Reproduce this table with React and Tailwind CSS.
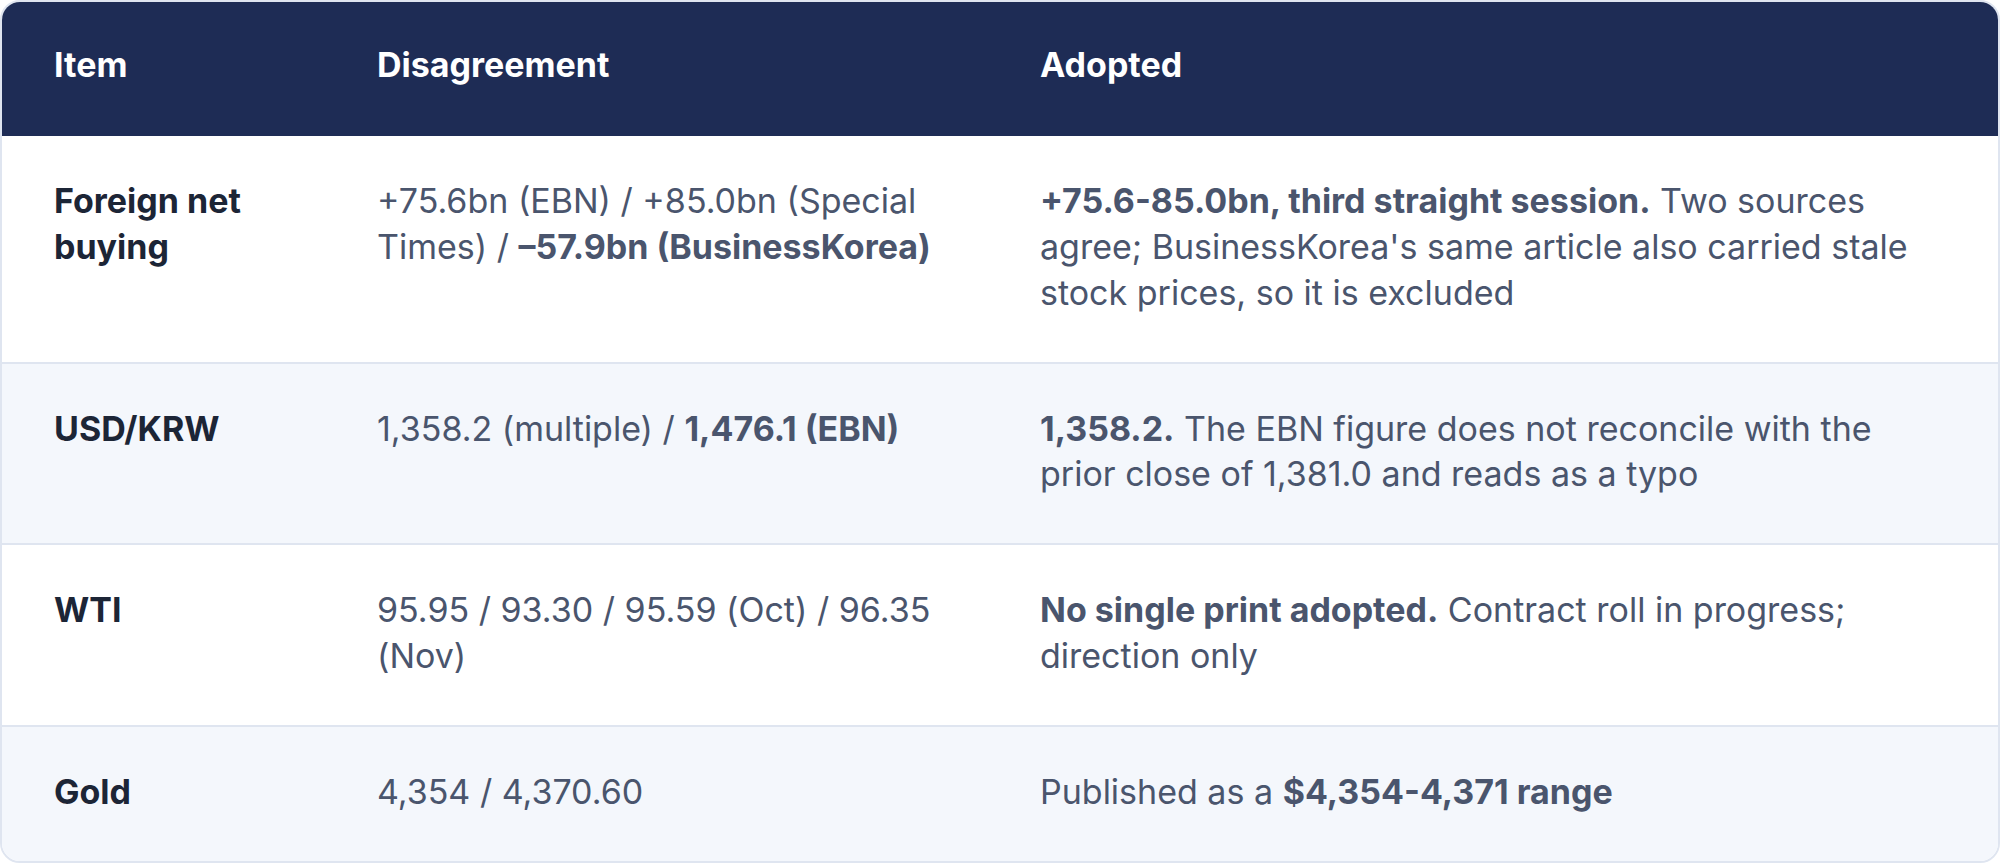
import React from 'react';

const rows = [
  {
    item: 'Foreign net buying',
    disagreement: (
      <>
        +75.6bn (EBN) / +85.0bn (Special Times) / <strong className="font-bold">–57.9bn (BusinessKorea)</strong>
      </>
    ),
    adopted: (
      <>
        <strong className="font-bold">+75.6-85.0bn, third straight session.</strong> Two sources agree; BusinessKorea's same article also carried stale stock prices, so it is excluded
      </>
    ),
  },
  {
    item: 'USD/KRW',
    disagreement: (
      <>
        1,358.2 (multiple) / <strong className="font-bold">1,476.1 (EBN)</strong>
      </>
    ),
    adopted: (
      <>
        <strong className="font-bold">1,358.2.</strong> The EBN figure does not reconcile with the prior close of 1,381.0 and reads as a typo
      </>
    ),
  },
  {
    item: 'WTI',
    disagreement: '95.95 / 93.30 / 95.59 (Oct) / 96.35 (Nov)',
    adopted: (
      <>
        <strong className="font-bold">No single print adopted.</strong> Contract roll in progress; direction only
      </>
    ),
  },
  {
    item: 'Gold',
    disagreement: '4,354 / 4,370.60',
    adopted: (
      <>
        Published as a <strong className="font-bold">$4,354-4,371 range</strong>
      </>
    ),
  },
];

export default function App() {
  return (
    <div className="w-[2000px] h-[864px] bg-white font-['Inter',sans-serif] text-[34px] leading-[1.35]">
      <div className="rounded-[20px] border-2 border-[#dfe5f0] overflow-hidden">
        <table className="w-full border-collapse text-left">
          <thead>
            <tr className="bg-[#1e2c55] text-white">
              <th className="w-[323px] px-[52px] pt-[40px] pb-[48px] font-bold">Item</th>
              <th className="w-[663px] px-[52px] pt-[40px] pb-[48px] font-bold">Disagreement</th>
              <th className="px-[52px] pt-[40px] pb-[48px] font-bold">Adopted</th>
            </tr>
          </thead>
          <tbody>
            {rows.map((r, i) => (
              <tr
                key={r.item}
                className={`${i % 2 === 1 ? 'bg-[#f4f7fc]' : 'bg-white'} ${i > 0 ? 'border-t-2 border-[#dfe5f0]' : ''}`}
              >
                <td className="px-[52px] pt-[42px] pb-[46px] align-top font-bold text-[#1c2536]">{r.item}</td>
                <td className="px-[52px] pt-[42px] pb-[46px] align-top text-[#4a556d]">{r.disagreement}</td>
                <td className="px-[52px] pt-[42px] pb-[46px] align-top text-[#4a556d]">{r.adopted}</td>
              </tr>
            ))}
          </tbody>
        </table>
      </div>
    </div>
  );
}
